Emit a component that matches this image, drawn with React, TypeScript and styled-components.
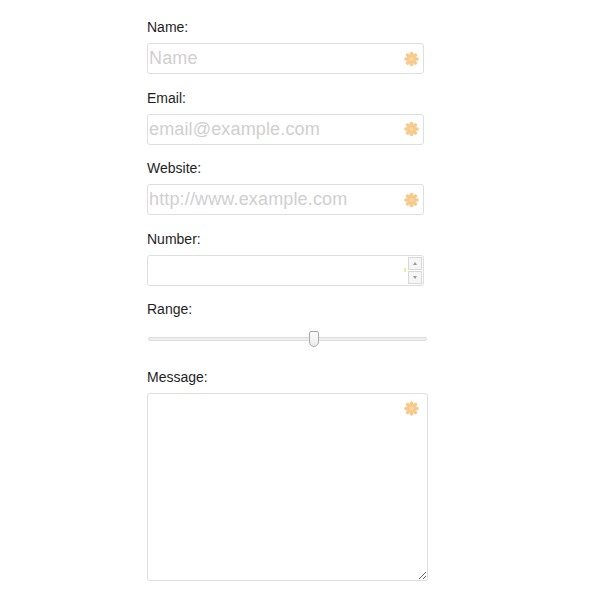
import React, { useState } from "react";
import styled, { createGlobalStyle } from "styled-components";

const GlobalStyle = createGlobalStyle`
  body {
    margin: 0;
    background: #fff;
    font-family: "Liberation Sans", Arial, sans-serif;
  }
`;

const Form = styled.form`
  display: flex;
  flex-direction: column;
  gap: 13.5px;
  padding: 17px 0 0 147px;
`;

const Field = styled.div`
  display: flex;
  flex-direction: column;
  gap: 6px;
`;

const Label = styled.label`
  font-size: 14px;
  line-height: 20px;
  color: #1e1e1e;
`;

const InputWrap = styled.div<{ $width: number }>`
  position: relative;
  width: ${(p) => p.$width}px;
`;

const TextInput = styled.input`
  box-sizing: border-box;
  width: 100%;
  height: 31px;
  border: 1px solid #dedede;
  border-radius: 3px;
  padding: 0 30px 0 1px;
  font-family: "Liberation Sans", Arial, sans-serif;
  font-size: 18px;
  letter-spacing: 0.15px;
  color: #444;
  outline: none;
  -moz-appearance: textfield;
  &::placeholder {
    color: #cfcfcf;
  }
  &::-webkit-inner-spin-button,
  &::-webkit-outer-spin-button {
    -webkit-appearance: none;
    margin: 0;
  }
`;

const TextArea = styled.textarea`
  box-sizing: border-box;
  width: 100%;
  height: 188px;
  border: 1px solid #dedede;
  border-radius: 3px;
  padding: 4px 30px 4px 4px;
  font-family: "Liberation Sans", Arial, sans-serif;
  font-size: 14px;
  outline: none;
  display: block;
`;

const Required = styled.span<{ $top?: number; $right?: number }>`
  position: absolute;
  right: ${(p) => p.$right ?? 5}px;
  top: ${(p) => (p.$top !== undefined ? `${p.$top}px` : "50%")};
  transform: ${(p) => (p.$top !== undefined ? "none" : "translateY(-50%)")};
  width: 15px;
  height: 15px;
  display: flex;
  pointer-events: none;
`;

const Spinner = styled.div`
  position: absolute;
  right: 2px;
  top: 2px;
  bottom: 2px;
  width: 14px;
  display: flex;
  flex-direction: column;
  gap: 1px;
`;

const SpinButton = styled.div`
  flex: 1;
  border: 1px solid #d8d8d8;
  background: #f6f6f6;
  display: flex;
  align-items: center;
  justify-content: center;
`;

const Arrow = styled.span<{ $up?: boolean }>`
  width: 0;
  height: 0;
  border-left: 2.5px solid transparent;
  border-right: 2.5px solid transparent;
  ${(p) =>
    p.$up ? "border-bottom: 3px solid #9a9a9a;" : "border-top: 3px solid #9a9a9a;"}
`;

const Dot = styled.span`
  position: absolute;
  right: 18px;
  top: 13px;
  width: 2px;
  height: 4px;
  background: #f3e7a6;
`;

const SliderBox = styled.div`
  width: 280px;
  height: 28px;
  display: flex;
  align-items: center;
`;

const Range = styled.input`
  -webkit-appearance: none;
  appearance: none;
  width: 278px;
  margin: 0 0 0 1px;
  height: 2px;
  background: #eeeeee;
  border: 1px solid #dddddd;
  border-radius: 3px;
  outline: none;
  &::-webkit-slider-thumb {
    -webkit-appearance: none;
    width: 10px;
    height: 16px;
    background: linear-gradient(#fdfdfd, #ebebeb);
    border: 1px solid #a9a9a9;
    border-radius: 2px 2px 5px 5px;
    cursor: pointer;
  }
`;

function Asterisk() {
  return (
    <svg width="15" height="15" viewBox="0 0 15 15">
      <g stroke="#f7c98a" strokeWidth="3.6" strokeLinecap="round">
        <line x1="7.5" y1="2" x2="7.5" y2="13" />
        <line x1="2" y1="7.5" x2="13" y2="7.5" />
        <line x1="3.6" y1="3.6" x2="11.4" y2="11.4" />
        <line x1="11.4" y1="3.6" x2="3.6" y2="11.4" />
      </g>
      <circle cx="7.5" cy="7.5" r="2" fill="#fad9a6" />
    </svg>
  );
}

export default function App() {
  const [range, setRange] = useState(60);

  return (
    <>
      <GlobalStyle />
      <Form onSubmit={(e) => e.preventDefault()}>
        <Field>
          <Label>Name:</Label>
          <InputWrap $width={277}>
            <TextInput type="text" placeholder="Name" />
            <Required>
              <Asterisk />
            </Required>
          </InputWrap>
        </Field>
        <Field>
          <Label>Email:</Label>
          <InputWrap $width={277}>
            <TextInput type="email" placeholder="email@example.com" />
            <Required>
              <Asterisk />
            </Required>
          </InputWrap>
        </Field>
        <Field>
          <Label>Website:</Label>
          <InputWrap $width={277}>
            <TextInput type="url" placeholder="http://www.example.com" />
            <Required>
              <Asterisk />
            </Required>
          </InputWrap>
        </Field>
        <Field>
          <Label>Number:</Label>
          <InputWrap $width={277}>
            <TextInput type="number" />
            <Dot />
            <Spinner>
              <SpinButton>
                <Arrow $up />
              </SpinButton>
              <SpinButton>
                <Arrow />
              </SpinButton>
            </Spinner>
          </InputWrap>
        </Field>
        <Field>
          <Label>Range:</Label>
          <SliderBox>
            <Range
              type="range"
              min={0}
              max={100}
              value={range}
              onChange={(e) => setRange(Number(e.target.value))}
            />
          </SliderBox>
        </Field>
        <Field>
          <Label>Message:</Label>
          <InputWrap $width={281}>
            <TextArea />
            <Required $top={8} $right={9}>
              <Asterisk />
            </Required>
          </InputWrap>
        </Field>
      </Form>
    </>
  );
}
